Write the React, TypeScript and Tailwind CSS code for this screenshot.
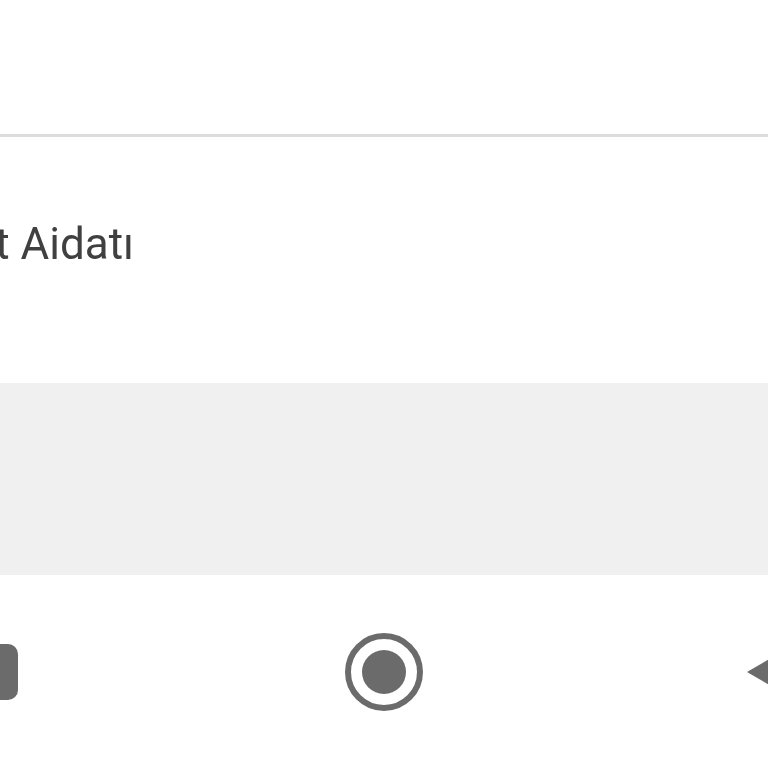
import React from "react";

export default function App() {
  return (
    <div className="w-[768px] h-[768px] overflow-hidden bg-white flex flex-col font-['Roboto',sans-serif] blur-[0.6px]">
      <div className="h-[137px] shrink-0 border-b-[3px] border-b-[#dcdcdc]" />

      <div className="h-[246px] shrink-0 flex items-center pb-[32px]">
        <div className="w-[134px] flex justify-end">
          <span className="whitespace-nowrap text-[44px] leading-none text-[#404040]">t Aidatı</span>
        </div>
      </div>

      <div className="h-[192px] shrink-0 bg-[#f1f0f0]" />

      <nav className="flex-1 flex items-center justify-between">
        <div className="w-[56px] h-[56px] -ml-[38px] rounded-[10px] bg-[#6b6b6b]" />
        <svg width="78" height="78" viewBox="0 0 78 78" className="shrink-0 ml-[2px]">
          <circle cx="39" cy="39" r="36" fill="none" stroke="#6b6b6b" strokeWidth="6" />
          <circle cx="39" cy="39" r="22" fill="#6b6b6b" />
        </svg>
        <svg width="50" height="44" viewBox="0 0 50 44" className="shrink-0 -mr-[29px]">
          <path d="M0 22 L50 -7 L50 51 Z" fill="#6b6b6b" />
        </svg>
      </nav>
    </div>
  );
}
